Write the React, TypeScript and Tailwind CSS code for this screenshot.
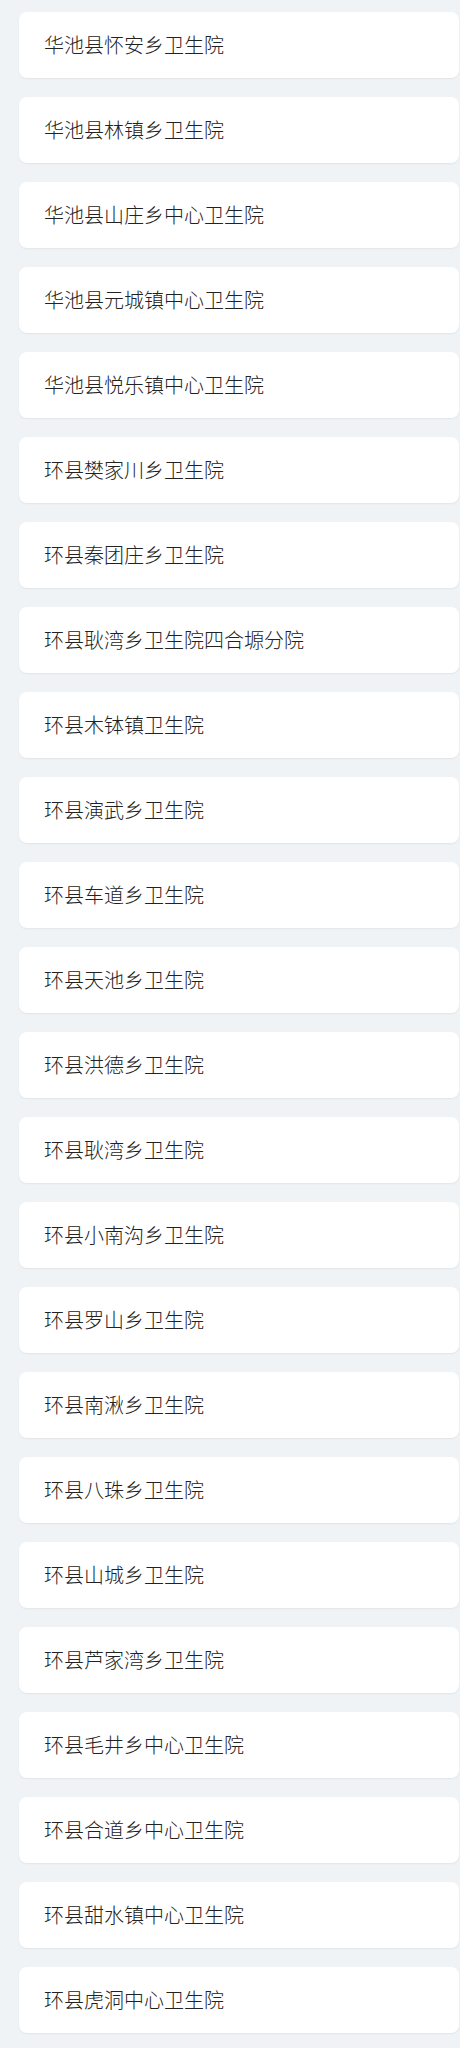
const hospitals = [
  "华池县怀安乡卫生院",
  "华池县林镇乡卫生院",
  "华池县山庄乡中心卫生院",
  "华池县元城镇中心卫生院",
  "华池县悦乐镇中心卫生院",
  "环县樊家川乡卫生院",
  "环县秦团庄乡卫生院",
  "环县耿湾乡卫生院四合塬分院",
  "环县木钵镇卫生院",
  "环县演武乡卫生院",
  "环县车道乡卫生院",
  "环县天池乡卫生院",
  "环县洪德乡卫生院",
  "环县耿湾乡卫生院",
  "环县小南沟乡卫生院",
  "环县罗山乡卫生院",
  "环县南湫乡卫生院",
  "环县八珠乡卫生院",
  "环县山城乡卫生院",
  "环县芦家湾乡卫生院",
  "环县毛井乡中心卫生院",
  "环县合道乡中心卫生院",
  "环县甜水镇中心卫生院",
  "环县虎洞中心卫生院",
];

export default function App() {
  return (
    <div
      className="min-h-[2048px] w-[460px] overflow-hidden bg-[#eff3f6] pt-3"
      style={{ fontFamily: '"Noto Sans CJK SC", "Noto Sans", sans-serif' }}
    >
      <ul className="ml-[19px] flex w-[440px] flex-col gap-[19px]">
        {hospitals.map((name) => (
          <li
            key={name}
            className="flex h-[66px] items-center rounded-lg bg-white pl-[25px] text-[20px] font-light text-[#222] shadow-[0_1px_2px_rgba(0,0,0,0.06)]"
          >
            {name}
          </li>
        ))}
      </ul>
    </div>
  );
}
